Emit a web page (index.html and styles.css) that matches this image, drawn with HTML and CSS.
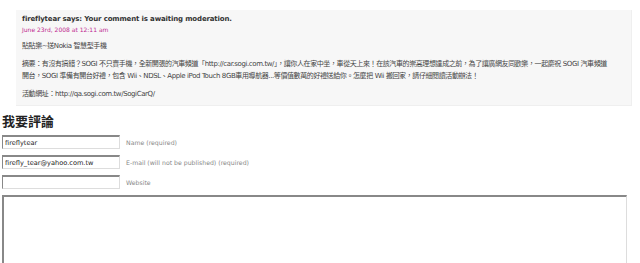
FILE: index.html
```html
<!DOCTYPE html>
<html lang="zh-Hant">
<head>
  <meta charset="UTF-8" />
  <title>我要評論</title>
  <link rel="stylesheet" href="styles.css">
</head>
<body>
  <ol class="commentlist">
    <li class="comment">
      <div class="comment-head">
        <cite>fireflytear</cite> says: <em>Your comment is awaiting moderation.</em>
      </div>
      <div class="comment-meta">June 23rd, 2008 at 12:11 am</div>
      <p>貼貼樂~送Nokia 智慧型手機</p>
      <p class="nowrap">摘要：有沒有搞錯？SOGI 不只賣手機，全新開張的汽車頻道「http://car.sogi.com.tw/」，讓你人在家中坐，車從天上來！在該汽車的崇高理想達成之前，為了讓廣網友同歡樂，一起慶祝 SOGI 汽車頻道<br>開台，SOGI 準備有開台好禮，包含 Wii、NDSL、Apple iPod Touch 8GB車用導航器...等價值數萬的好禮送給你。怎麼把 Wii 搬回家，請仔細閱讀活動辦法！</p>
      <p>活動網址：http://qa.sogi.com.tw/SogiCarQ/</p>
    </li>
  </ol>

  <h3 class="respond">我要評論</h3>
  <form class="commentform">
    <div class="field">
      <input type="text" value="fireflytear">
      <label>Name (required)</label>
    </div>
    <div class="field">
      <input type="text" value="firefly_tear@yahoo.com.tw">
      <label>E-mail (will not be published) (required)</label>
    </div>
    <div class="field">
      <input type="text" value="">
      <label>Website</label>
    </div>
    <textarea rows="10"></textarea>
  </form>
</body>
</html>
```

FILE: styles.css
```css
body {
  margin: 0;
  padding: 10px 2px 0 2px;
  background: #fff;
  color: #333;
  font-family: "DejaVu Sans", "Noto Sans CJK TC", sans-serif;
  font-size: 8px;
}
.commentlist {
  list-style: none;
  margin: 0 6px 0 14px;
  padding: 0;
}
.comment {
  background: #f7f7f7;
  border-right: 1px solid #efefef;
  border-bottom: 1px solid #efefef;
  padding: 4px 6px 5px 6px;
}
.comment-head {
  font-weight: bold;
  font-size: 7px;
  letter-spacing: -0.15px;
  line-height: 11px;
  color: #333;
}
.comment-head cite,
.comment-head em {
  font-style: normal;
}
.comment-meta {
  color: #c0288f;
  font-size: 6px;
  line-height: 9px;
}
.comment p {
  margin: 6px 0 0 0;
  line-height: 12px;
  font-size: 7px;
  letter-spacing: -0.4px;
  color: #444;
}
.comment p.nowrap {
  white-space: nowrap;
}
.respond {
  margin: 8px 0 5px 0;
  font-size: 13px;
  font-weight: bold;
  color: #222;
  line-height: 16px;
}
.field {
  display: flex;
  align-items: center;
  gap: 6px;
  margin-bottom: 6px;
}
.field input {
  width: 112px;
  height: 11px;
  padding: 0 2px;
  border: 1px solid #ddd;
  border-top: 2px solid #888;
  border-left: 1px solid #888;
  font-family: inherit;
  font-size: 6.6px;
  color: #222;
  background: #fff;
}
.field label {
  color: #888;
  font-size: 6.2px;
}
textarea {
  display: block;
  width: 618px;
  height: 90px;
  margin-top: 0;
  border: 1px solid #ddd;
  border-top: 2px solid #888;
  border-left: 2px solid #888;
  resize: none;
}
```
